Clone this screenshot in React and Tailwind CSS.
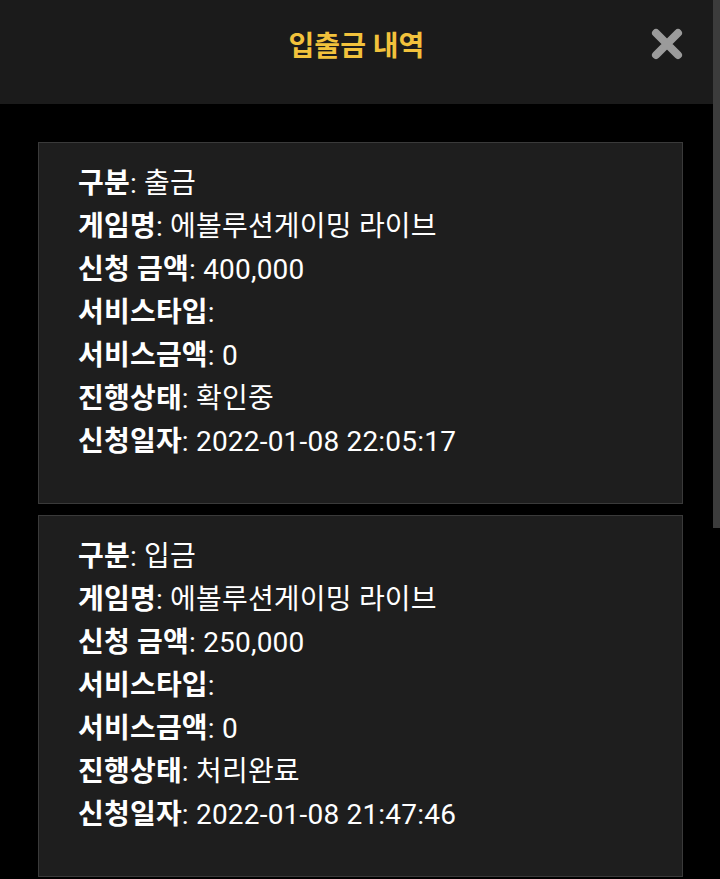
import { useState } from 'react';

const records = [
  {
    id: 1,
    type: '출금',
    game: '에볼루션게이밍 라이브',
    amount: '400,000',
    serviceType: '',
    serviceAmount: '0',
    status: '확인중',
    date: '2022-01-08 22:05:17',
  },
  {
    id: 2,
    type: '입금',
    game: '에볼루션게이밍 라이브',
    amount: '250,000',
    serviceType: '',
    serviceAmount: '0',
    status: '처리완료',
    date: '2022-01-08 21:47:46',
  },
];

const font = { fontFamily: 'Roboto, "Noto Sans CJK KR", sans-serif' };

function Row({ label, value }) {
  return (
    <p className="h-[43px] leading-[43px] whitespace-nowrap tracking-[0.2px]">
      <span className="font-bold">{label}</span>: {value}
    </p>
  );
}

function RecordCard({ r }) {
  return (
    <div className="h-[362px] shrink-0 border border-[#3a3a3a] bg-[#1e1e1e] pl-[39px] pt-[19px] text-[28px] text-white">
      <Row label="구분" value={r.type} />
      <Row label="게임명" value={r.game} />
      <Row label="신청 금액" value={r.amount} />
      <Row label="서비스타입" value={r.serviceType} />
      <Row label="서비스금액" value={r.serviceAmount} />
      <Row label="진행상태" value={r.status} />
      <Row label="신청일자" value={r.date} />
    </div>
  );
}

export default function App() {
  const [items] = useState(records);

  return (
    <div className="flex h-[879px] w-[720px] overflow-hidden bg-black" style={font}>
      <div className="flex flex-1 flex-col">
        <header className="relative flex h-[104px] shrink-0 justify-center bg-[#1b1b1b] pt-[32px]">
          <h1 className="text-[28px] font-bold leading-[30px] text-[#f2c23c]">입출금 내역</h1>
          <button className="absolute right-[30px] top-[28px] h-[32px] w-[32px]">
            <svg viewBox="0 0 32 32" className="h-full w-full">
              <path d="M5 5 L27 27 M27 5 L5 27" stroke="#9b9b9b" strokeWidth="8" strokeLinecap="round" />
            </svg>
          </button>
        </header>
        <main className="flex flex-col gap-[11px] pl-[38px] pr-[30px] pt-[38px]">
          {items.map((r) => (
            <RecordCard key={r.id} r={r} />
          ))}
        </main>
      </div>
      <div className="w-[7px] shrink-0">
        <div className="h-[528px] bg-[#3c3c3c]" />
      </div>
    </div>
  );
}
